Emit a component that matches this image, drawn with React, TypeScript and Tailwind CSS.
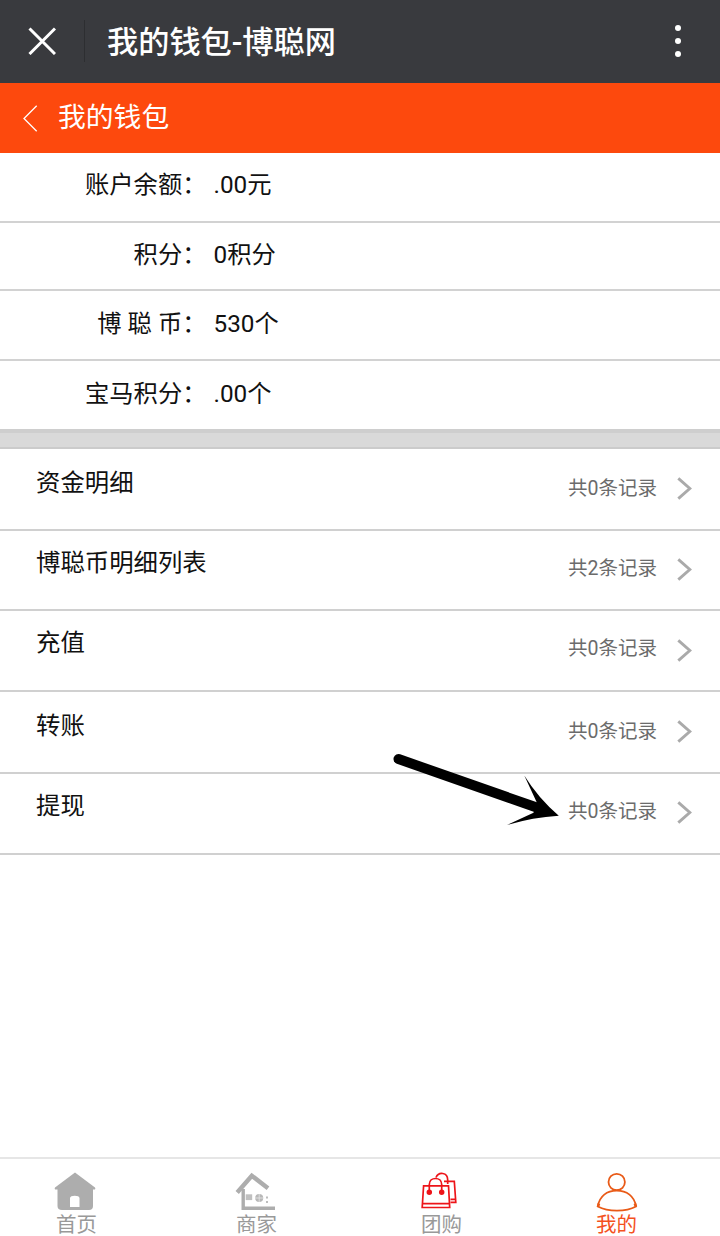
import React from 'react';

interface BalanceItem {
  label: string;
  value: string;
  height: string;
}

interface RecordItem {
  title: string;
  count: number;
  height: string;
  titleTop: string;
  chevronTop: string;
}

const balances: BalanceItem[] = [
  { label: '账户余额：', value: '.00元', height: 'h-[70px] pt-[14px]' },
  { label: '积分：', value: '0积分', height: 'h-[68px] pt-[14px]' },
  { label: '博 聪 币：', value: '530个', height: 'h-[70px] pt-[15px]' },
  { label: '宝马积分：', value: '.00个', height: 'h-[68px] pt-[15px]' },
];

const records: RecordItem[] = [
  { title: '资金明细', count: 0, height: 'h-[82px]', titleTop: 'pt-[16px]', chevronTop: 'mt-[28px]' },
  { title: '博聪币明细列表', count: 2, height: 'h-[80px]', titleTop: 'pt-[14px]', chevronTop: 'mt-[27px]' },
  { title: '充值', count: 0, height: 'h-[81px]', titleTop: 'pt-[14px]', chevronTop: 'mt-[28px]' },
  { title: '转账', count: 0, height: 'h-[82px]', titleTop: 'pt-[16px]', chevronTop: 'mt-[28px]' },
  { title: '提现', count: 0, height: 'h-[81px]', titleTop: 'pt-[14px]', chevronTop: 'mt-[27px]' },
];

function HomeIcon() {
  return (
    <svg width="42" height="40" viewBox="0 0 42 40" fill="#adadad">
      <path
        fillRule="evenodd"
        d="M21 0.500 L41 15.500 Q42 17.500 40 17.500 H39 V34 Q39 38 35 38 H8 Q3.500 38 3.500 34 V17.500 H2 Q0 17.500 1 15.500 Z M16 35 H25.500 V26 Q25 23.700 20.800 23.700 Q16.500 23.700 16 26 Z"
      />
    </svg>
  );
}

function ShopIcon() {
  return (
    <svg width="42" height="40" viewBox="0 0 42 40" fill="none">
      <path d="M2.200 20.500 L16.800 3.700 L33 16.300" stroke="#adadad" strokeWidth="4.400" />
      <path d="M8.200 17 V36.300 H40" stroke="#adadad" strokeWidth="3.400" />
      <path d="M10.700 22.300 h6.500 v5.800 h-6.500 z" fill="#c0c0c0" />
      <circle cx="24.200" cy="26" r="4" fill="#b8b8b8" />
      <path d="M20 26 H28.500 M24.200 22 V30" stroke="#e8e8e8" strokeWidth="0.8" />
      <path d="M31 24.500 h2 v2 h-2 z M31 29 h2 v2 h-2 z" fill="#bdbdbd" />
    </svg>
  );
}

function BagIcon() {
  return (
    <svg width="42" height="40" viewBox="0 0 42 40" fill="none" stroke="#ed1419" strokeWidth="1.7">
      <path d="M3.600 13.800 H28.500 L29.700 35.500 H2.200 Z M3 31.700 H29.500" />
      <path d="M9.300 20 V12.500 C9.300 4.500 21.700 4.500 21.700 12.500 V20" />
      <path d="M16 5.500 C18.500 -0.500 27.700 0 27.700 8 V12 M24 9.300 H34.300 L35.800 30.300 H30.500 M30.500 27.300 H35.500" />
      <circle cx="9.300" cy="20.200" r="1.900" fill="#ed1419" />
      <circle cx="21.700" cy="20.200" r="1.900" fill="#ed1419" />
    </svg>
  );
}

function UserIcon() {
  return (
    <svg width="42" height="40" viewBox="0 0 42 40" fill="none" stroke="#e95a17" strokeWidth="1.8">
      <circle cx="20.700" cy="10" r="8.200" />
      <path d="M1.800 34.500 C3.500 24 11 18.700 20.700 18.700 C30.500 18.700 38.500 24 40 34.500 C30 40 12 40 1.800 34.500 Z" />
      <path d="M1.900 34.800 L3 31.500 M40 34.800 L38.800 31.500" strokeWidth="2.600" />
    </svg>
  );
}

const tabs = [
  { label: '首页', icon: <HomeIcon />, color: 'text-[#999]', place: 'ml-[54px]', text: 'ml-[2px]' },
  { label: '商家', icon: <ShopIcon />, color: 'text-[#999]', place: 'ml-[139px]', text: 'ml-[1px]' },
  { label: '团购', icon: <BagIcon />, color: 'text-[#999]', place: 'ml-[143px]', text: 'ml-[1px]' },
  { label: '我的', icon: <UserIcon />, color: 'text-[#f4511e]', place: 'ml-[134px]', text: 'ml-0' },
];

export default function App() {
  return (
    <div className="relative flex h-[1236px] w-[720px] flex-col overflow-hidden bg-white font-[Roboto,'Noto_Sans_CJK_SC',sans-serif] text-[#111]">
      {/* Browser title bar */}
      <header className="flex h-[83px] shrink-0 items-center bg-[#393a3e] text-white">
        <svg className="-mt-px ml-[28px]" width="28" height="28" viewBox="0 0 28 28" stroke="#fff" strokeWidth="3">
          <path d="M1.500 1.500 L27 27 M27 1.500 L1.500 27" />
        </svg>
        <div className="-mt-[2px] ml-[28px] h-[42px] w-px bg-[#2d2e31]" />
        <h1 className="mt-[2px] ml-[22px] text-[31.200px] leading-[40px] font-medium">我的钱包-博聪网</h1>
        <div className="-mt-px mr-[39px] ml-auto flex flex-col gap-[7px]">
          <span className="size-[6px] rounded-full bg-white" />
          <span className="size-[6px] rounded-full bg-white" />
          <span className="size-[6px] rounded-full bg-white" />
        </div>
      </header>

      {/* Page header */}
      <div className="flex h-[70px] shrink-0 items-center bg-[#fd490d] text-white">
        <svg className="ml-[23px]" width="15" height="27" viewBox="0 0 15 27" fill="none" stroke="#fff" strokeWidth="1.300">
          <path d="M13.700 0.800 L1 13.500 L13.700 26.200" />
        </svg>
        <h2 className="-mt-px ml-[20px] text-[27.800px] leading-[40px]">我的钱包</h2>
      </div>

      {/* Balances */}
      <section className="shrink-0">
        {balances.map((item, i) => (
          <div
            key={item.label}
            className={`flex text-[24.300px] leading-[36px] ${item.height} ${i < 3 ? 'border-b-2 border-[#d2d2d2]' : ''}`}
          >
            <span className="w-[206.500px] text-right whitespace-pre">{item.label}</span>
            <span className="ml-[7px]">{item.value}</span>
          </div>
        ))}
      </section>

      <div className="h-[20px] shrink-0 border-t-4 border-b-2 border-t-[#cecece] border-b-[#cbcbcb] bg-[#d9d9d9]" />

      {/* Records */}
      <section className="shrink-0">
        {records.map((item) => (
          <div key={item.title} className={`flex border-b-2 border-[#d0d0d0] ${item.height}`}>
            <span className={`ml-[36px] text-[24.400px] leading-[36px] ${item.titleTop}`}>{item.title}</span>
            <span className={`ml-auto text-[19.500px] leading-[48px] text-[#6b6b6b] ${item.titleTop}`}>
              共{item.count}条记录
            </span>
            <svg
              className={`mr-[28px] ml-[20px] ${item.chevronTop}`}
              width="15"
              height="23"
              viewBox="0 0 15 23"
              fill="none"
              stroke="#aaa"
              strokeWidth="2.900"
            >
              <path d="M1.300 1.300 L12.800 11.500 L1.300 21.700" />
            </svg>
          </div>
        ))}
      </section>

      {/* Pointer drawn over the list */}
      <svg className="absolute top-[750px] left-[390px]" width="172" height="80" viewBox="0 0 172 80">
        <path d="M8.500 9 L146 57.300" stroke="#000" strokeWidth="10" strokeLinecap="round" />
        <path d="M134.300 25.500 Q148 47.800 168.800 65.800 Q142 67.500 116.700 75.200 L143.500 62.700 L146.700 52.300 Z" />
      </svg>

      {/* Bottom tabs */}
      <nav className="mt-auto flex h-[79px] shrink-0 border-t-2 border-[#e6e6e6]">
        {tabs.map((tab) => (
          <div key={tab.label} className={`w-[42px] pt-[13px] ${tab.place}`}>
            {tab.icon}
            <div className={`-mt-[2px] text-[20.500px] leading-[30px] whitespace-nowrap ${tab.color} ${tab.text}`}>
              {tab.label}
            </div>
          </div>
        ))}
      </nav>
    </div>
  );
}
